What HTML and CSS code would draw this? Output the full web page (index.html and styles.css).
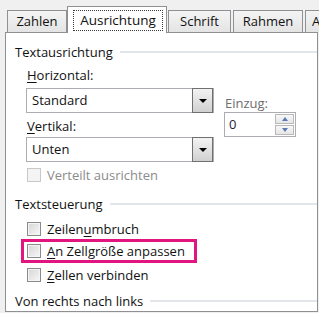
FILE: index.html
```html
<!DOCTYPE html>
<html lang="de">
<head>
<meta charset="utf-8">
<title>Zellen formatieren – Ausrichtung</title>
<link rel="stylesheet" href="styles.css">
</head>
<body>
<div class="dialog">
  <div class="tabs">
    <div class="tab t-zahlen">Zahlen</div>
    <div class="tab active t-ausrichtung"><span class="focus">Ausrichtung</span></div>
    <div class="tab t-schrift">Schrift</div>
    <div class="tab t-rahmen">Rahmen</div>
    <div class="tab t-more">A</div>
  </div>
  <div class="panel">
    <div class="group-title"><span>Textausrichtung</span><i class="rule"></i></div>
    <div class="group-body">
      <div class="align-row">
        <div class="left-col">
          <div class="label"><u>H</u>orizontal:</div>
          <div class="select"><span class="value">Standard</span><span class="drop"><i class="arrow"></i></span></div>
          <div class="label label-gap"><u>V</u>ertikal:</div>
          <div class="select select-2"><span class="value">Unten</span><span class="drop"><i class="arrow"></i></span></div>
          <div class="check disabled check-first"><span class="box"></span><span>Verteilt ausrichten</span></div>
        </div>
        <div class="right-col">
          <div class="label muted">Einzug:</div>
          <div class="spin"><span class="value">0</span><span class="spin-btns"><span class="sb"><i class="up"></i></span><span class="sb"><i class="down"></i></span></span></div>
        </div>
      </div>
    </div>
    <div class="group-title gt-2"><span>Textsteuerung</span><i class="rule"></i></div>
    <div class="group-body">
      <div class="check c-wrap"><span class="box"></span><span>Zeilen<u>u</u>mbruch</span></div>
      <div class="check highlight"><span class="box"></span><span><u>A</u>n Zellgröße anpassen</span></div>
      <div class="check c-merge"><span class="box"></span><span><u>Z</u>ellen verbinden</span></div>
    </div>
    <div class="group-title gt-3"><span>Von rechts nach links</span><i class="rule"></i></div>
  </div>
</div>
</body>
</html>
```

FILE: styles.css
```css
* { box-sizing: border-box; }
html, body { margin: 0; padding: 0; }
body {
  width: 319px;
  height: 313px;
  overflow: hidden;
  background: #f0f0f0;
  font-family: "Open Sans", "Noto Sans", sans-serif;
  font-size: 13px;
  color: #111;
}
u { text-decoration: underline; text-underline-offset: 2px; text-decoration-thickness: 1px; }

.dialog { padding: 6px 0 0 5px; }

/* tabs */
.tabs {
  display: flex;
  align-items: flex-end;
  height: 26px;
  padding-left: 2px;
  position: relative;
  z-index: 1;
  white-space: nowrap;
}
.tab {
  flex: none;
  height: 22px;
  line-height: 20px;
  text-align: center;
  border: 1px solid #8e9094;
  border-bottom: none;
  background: linear-gradient(#f4f4f4, #e4e4e4);
  color: #111;
  overflow: hidden;
}
.t-zahlen { width: 60px; }
.t-ausrichtung { width: 100px; font-size: 13.5px; }
.t-schrift { width: 63px; margin-left: 1px; }
.t-rahmen { width: 70px; margin-left: 2px; }
.t-more { width: 14px; margin-left: 2px; text-align: left; padding-left: 6px; border-right: none; }
.tab.active {
  height: 27px;
  margin-bottom: -1px;
  background: #fff;
  padding: 3px 3px 0 5px;
  line-height: 18px;
}
.focus {
  display: block;
  height: 21px;
  line-height: 19px;
  border: 1px dotted #3a3a3a;
}

/* panel */
.panel {
  width: 313px;
  height: 280px;
  background: #fff;
  border: 1px solid #8e9094;
  padding: 10px 0 0 9px;
}
.group-title {
  display: flex;
  align-items: center;
  height: 18px;
  line-height: 18px;
  gap: 7px;
}
.group-title .rule {
  flex: 1;
  height: 2px;
  background: #e2e6eb;
}
.gt-2 { margin-top: 11px; }
.gt-3 { margin-top: 8px; }
.group-body { padding-left: 11px; }

.align-row { display: flex; gap: 10px; margin-top: 5px; }
.left-col { width: 188px; display: flex; flex-direction: column; }
.right-col { display: flex; flex-direction: column; margin-top: 28px; }
.label { height: 18px; line-height: 18px; padding-left: 1px; }
.label-gap { margin-top: 4px; }
.muted { color: #6d6d6d; }

.select {
  display: flex;
  height: 25px;
  margin-top: 4px;
  border: 1px solid #abadb3;
  background: #fff;
}
.select-2 { margin-top: 2px; }
.select .value { flex: 1; padding-left: 5px; line-height: 22px; }
.drop {
  width: 21px;
  height: 25px;
  margin: -1px 0 -1px 0;
  border: 1px solid #707070;
  background: linear-gradient(#f3f3f3, #e2e2e2 50%, #d0d0d0);
  display: flex;
  align-items: center;
  justify-content: center;
}
.arrow {
  width: 0; height: 0;
  border-left: 4px solid transparent;
  border-right: 4px solid transparent;
  border-top: 4px solid #000;
  margin-top: 1px;
}

.spin {
  display: flex;
  width: 72px;
  height: 25px;
  border: 1px solid #abadb3;
  background: #fff;
}
.spin .value { flex: 1; padding-left: 4px; line-height: 22px; color: #1b1b3a; }
.spin-btns {
  width: 19px;
  margin: 1px 1px 1px 0;
  display: flex;
  flex-direction: column;
  gap: 1px;
}
.sb {
  flex: 1;
  border: 1px solid #b9b9b9;
  background: linear-gradient(#f7f7f7, #e6e6e6);
  display: flex;
  align-items: center;
  justify-content: center;
}
.up, .down {
  width: 0; height: 0;
  border-left: 3.5px solid transparent;
  border-right: 3.5px solid transparent;
}
.up { border-bottom: 4px solid #5b79b8; }
.down { border-top: 4px solid #5b79b8; }

/* checkboxes */
.check {
  display: flex;
  align-items: center;
  height: 18px;
  line-height: 18px;
  padding-left: 1px;
}
.check .box {
  width: 14px;
  height: 14px;
  margin-right: 6px;
  border: 1px solid #8a8a8a;
  background: linear-gradient(135deg, #d6d6d6, #f7f7f7);
  box-shadow: inset 0 0 0 1px #f4f4f4;
}
.check-first { margin-top: 4px; }
.check.disabled { color: #8b8b8b; }
.check.disabled .box { border-color: #c8c8c8; background: #f4f4f4; box-shadow: none; }
.c-wrap { margin-top: 7px; }
.highlight {
  height: 24px;
  width: 176px;
  margin: 1px 0 0 -5px;
  padding-left: 3px;
  border: 3px solid #e2147f;
}
.c-merge { margin-top: 3px; }
```
